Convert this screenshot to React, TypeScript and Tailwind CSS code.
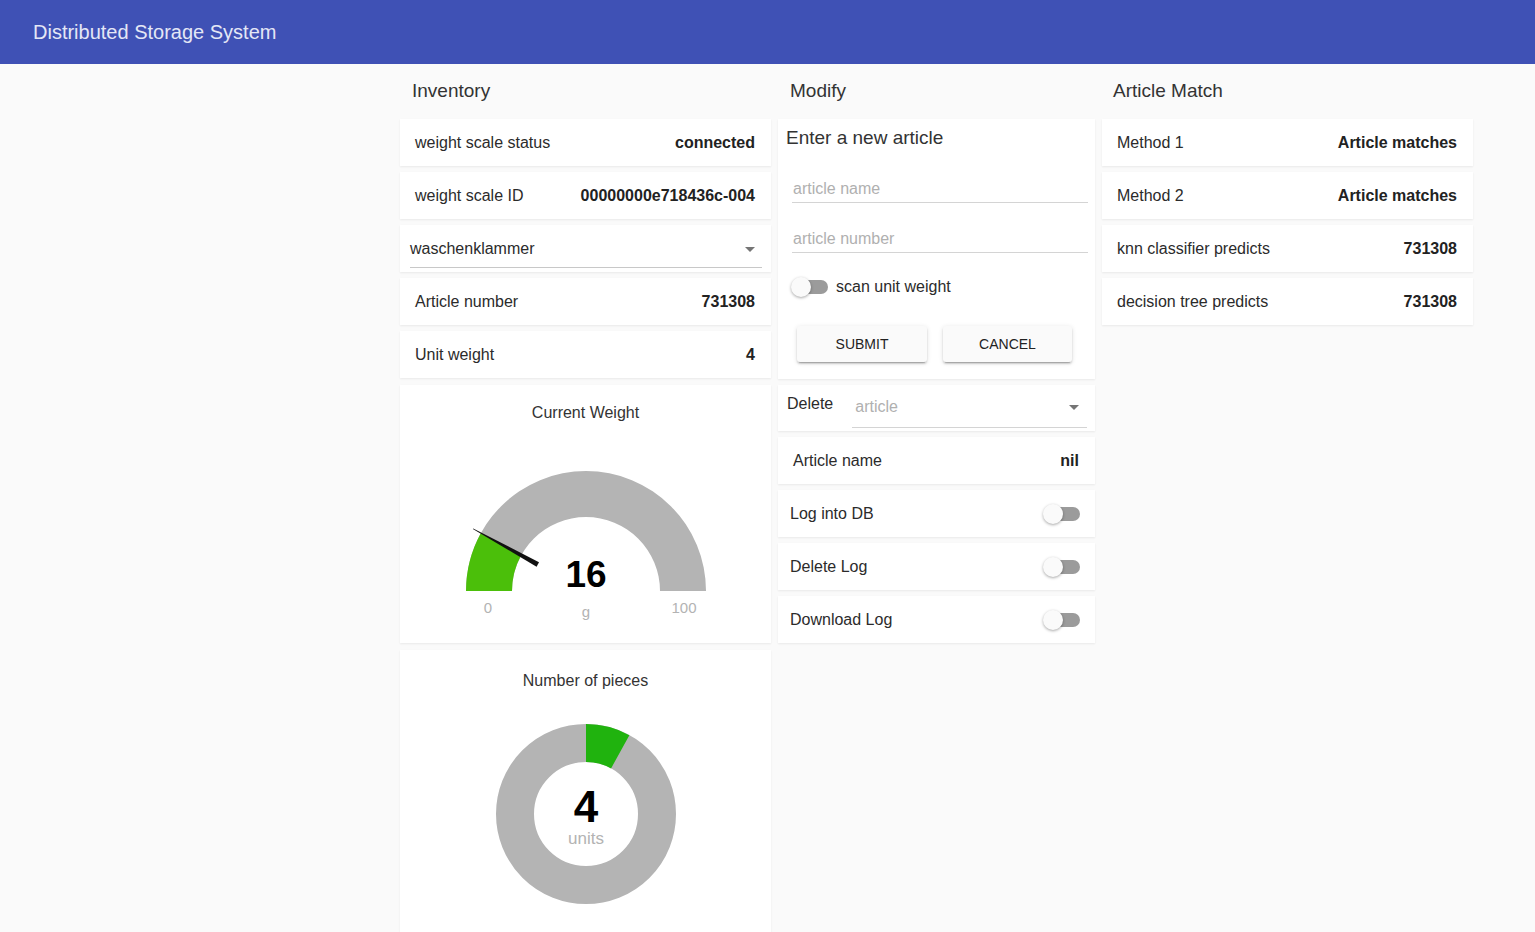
import React from "react";

const font = { fontFamily: '"Liberation Sans", Arial, sans-serif' };

function Card({ children, className = "" }: { children: React.ReactNode; className?: string }) {
  return (
    <div className={"bg-white shadow-[0_1px_2px_rgba(0,0,0,0.07)] " + className}>{children}</div>
  );
}

function Row({ label, value, pl = "pl-[15px]" }: { label: string; value: string; pl?: string }) {
  return (
    <Card className={"h-[47px] flex items-center justify-between pr-4 " + pl}>
      <span className="text-[16px] text-[#2b2b2b]">{label}</span>
      <span className="text-[16px] font-bold text-[#222]">{value}</span>
    </Card>
  );
}

function Switch() {
  return (
    <div className="relative w-[37px] h-[20px] shrink-0">
      <div className="absolute left-[3px] top-[3px] w-[34px] h-[14px] rounded-full bg-[#9b9b9b]" />
      <div className="absolute left-0 top-0 w-[20px] h-[20px] rounded-full bg-[#fafafa] shadow-[0_1px_3px_rgba(0,0,0,0.35)]" />
    </div>
  );
}

function Arrow() {
  return (
    <svg width="10" height="5" viewBox="0 0 10 5">
      <path d="M0 0 L10 0 L5 5 Z" fill="#757575" />
    </svg>
  );
}

function ToggleRow({ label }: { label: string }) {
  return (
    <Card className="h-[47px] flex items-center justify-between pl-3 pr-[15px]">
      <span className="text-[16px] text-[#2b2b2b]">{label}</span>
      <Switch />
    </Card>
  );
}

function Gauge() {
  return (
    <svg width="371" height="219" viewBox="0 0 371 219" style={font}>
      <path d="M 66 167 A 120 120 0 0 1 306 167 L 260 167 A 74 74 0 0 0 112 167 Z" fill="#b4b4b4" />
      <path d="M 66 167 A 120 120 0 0 1 80.8 109.2 L 121.2 131.3 A 74 74 0 0 0 112 167 Z" fill="#4bbf0a" />
      <polygon points="73.2,104.4 139,138.3 136.6,142.7 72.9,104.9" fill="#111" />
      <text x="186" y="163" textAnchor="middle" fontSize="37" fontWeight="bold" fill="#000">16</text>
      <text x="88" y="189" textAnchor="middle" fontSize="15" fill="#b3b3b3">0</text>
      <text x="186" y="193" textAnchor="middle" fontSize="15" fill="#b3b3b3">g</text>
      <text x="284" y="189" textAnchor="middle" fontSize="15" fill="#b3b3b3">100</text>
    </svg>
  );
}

function Donut() {
  const r = 71;
  const c = 2 * Math.PI * r;
  const g = c * 0.08;
  return (
    <svg width="371" height="250" viewBox="0 0 371 250" style={font}>
      <circle cx="186" cy="122" r={r} fill="none" stroke="#b4b4b4" strokeWidth="38" />
      <circle
        cx="186"
        cy="122"
        r={r}
        fill="none"
        stroke="#20b30e"
        strokeWidth="38"
        strokeDasharray={`${g} ${c - g}`}
        transform="rotate(-90 186 122)"
      />
      <text x="186" y="130" textAnchor="middle" fontSize="44" fontWeight="bold" fill="#000">4</text>
      <text x="186" y="152" textAnchor="middle" fontSize="17" fill="#b3b3b3">units</text>
    </svg>
  );
}

function SectionTitle({ children, pl = "pl-3" }: { children: React.ReactNode; pl?: string }) {
  return (
    <div className={"h-[55px] flex items-center pb-[1px] text-[19px] text-[#333] " + pl}>{children}</div>
  );
}

function Button({ children, w }: { children: React.ReactNode; w: string }) {
  return (
    <div
      className={
        "h-[36px] flex items-center justify-center rounded-[3px] bg-[#fafafa] text-[14px] text-[#222] shadow-[0_3px_1px_-2px_rgba(0,0,0,0.2),0_2px_2px_0_rgba(0,0,0,0.14),0_1px_5px_0_rgba(0,0,0,0.12)] " +
        w
      }
    >
      {children}
    </div>
  );
}

export default function App() {
  return (
    <div className="min-h-[932px] bg-[#fafafa]" style={font}>
      <header className="h-[64px] bg-[#3f51b5] flex items-center pl-[33px]">
        <span className="text-[20px] text-[#e4e7f6]">Distributed Storage System</span>
      </header>
      <div className="flex gap-[7px] ml-[400px]">
        {/* Inventory */}
        <div className="w-[371px] flex flex-col">
          <SectionTitle>Inventory</SectionTitle>
          <div className="flex flex-col gap-[6px]">
            <Row label="weight scale status" value="connected" />
            <Row label="weight scale ID" value="00000000e718436c-004" />
            <Card className="h-[47px] pl-[10px] pr-[9px] pt-3">
              <div className="h-[24px] flex items-center justify-between pr-[7px]">
                <span className="text-[16px] text-[#2b2b2b]">waschenklammer</span>
                <Arrow />
              </div>
              <div className="mt-[6px] h-px bg-[#c8c8c8]" />
            </Card>
            <Row label="Article number" value="731308" />
            <Row label="Unit weight" value="4" />
            <Card className="h-[258px] mt-px flex flex-col items-center">
              <div className="pt-[17px] leading-[22px] text-[16px] text-[#333]">Current Weight</div>
              <Gauge />
            </Card>
            <Card className="flex flex-col items-center mt-px">
              <div className="pt-[20px] leading-[22px] text-[16px] text-[#333]">Number of pieces</div>
              <Donut />
            </Card>
          </div>
        </div>

        {/* Modify */}
        <div className="w-[317px] flex flex-col">
          <SectionTitle>Modify</SectionTitle>
          <div className="flex flex-col gap-[6px]">
            <Card className="h-[260px] flex flex-col">
              <div className="pl-2 pt-[7px] leading-[24px] text-[19px] text-[#333]">Enter a new article</div>
              <div className="ml-[14px] mr-[7px] mt-[29px]">
                <div className="h-[20px] flex items-center pl-px text-[16px] text-[#b0b0b0]">article name</div>
                <div className="mt-[3px] h-px bg-[#d4d4d4]" />
              </div>
              <div className="ml-[14px] mr-[7px] mt-[26px]">
                <div className="h-[20px] flex items-center pl-px text-[16px] text-[#b0b0b0]">article number</div>
                <div className="mt-[3px] h-px bg-[#d4d4d4]" />
              </div>
              <div className="ml-[13px] mt-[22px] flex items-center gap-[8px]">
                <Switch />
                <span className="text-[16px] text-[#2b2b2b]">scan unit weight</span>
              </div>
              <div className="ml-[19px] mt-[27px] flex gap-4">
                <Button w="w-[130px]">SUBMIT</Button>
                <Button w="w-[129px]">CANCEL</Button>
              </div>
            </Card>
            <Card className="h-[46px] flex items-start pl-[9px] pr-2">
              <span className="pt-[9px] leading-[20px] text-[16px] text-[#2b2b2b]">Delete</span>
              <div className="ml-[19px] flex-1 pt-[12px]">
                <div className="h-[20px] flex items-center justify-between pl-[3px] pr-[8px]">
                  <span className="text-[16px] text-[#b0b0b0]">article</span>
                  <Arrow />
                </div>
                <div className="mt-[10px] h-px bg-[#d4d4d4]" />
              </div>
            </Card>
            <Row label="Article name" value="nil" />
            <ToggleRow label="Log into DB" />
            <ToggleRow label="Delete Log" />
            <ToggleRow label="Download Log" />
          </div>
        </div>

        {/* Article Match */}
        <div className="w-[371px] flex flex-col">
          <SectionTitle pl="pl-[11px]">Article Match</SectionTitle>
          <div className="flex flex-col gap-[6px]">
            <Row label="Method 1" value="Article matches" />
            <Row label="Method 2" value="Article matches" />
            <Row label="knn classifier predicts" value="731308" />
            <Row label="decision tree predicts" value="731308" />
          </div>
        </div>
      </div>
    </div>
  );
}
